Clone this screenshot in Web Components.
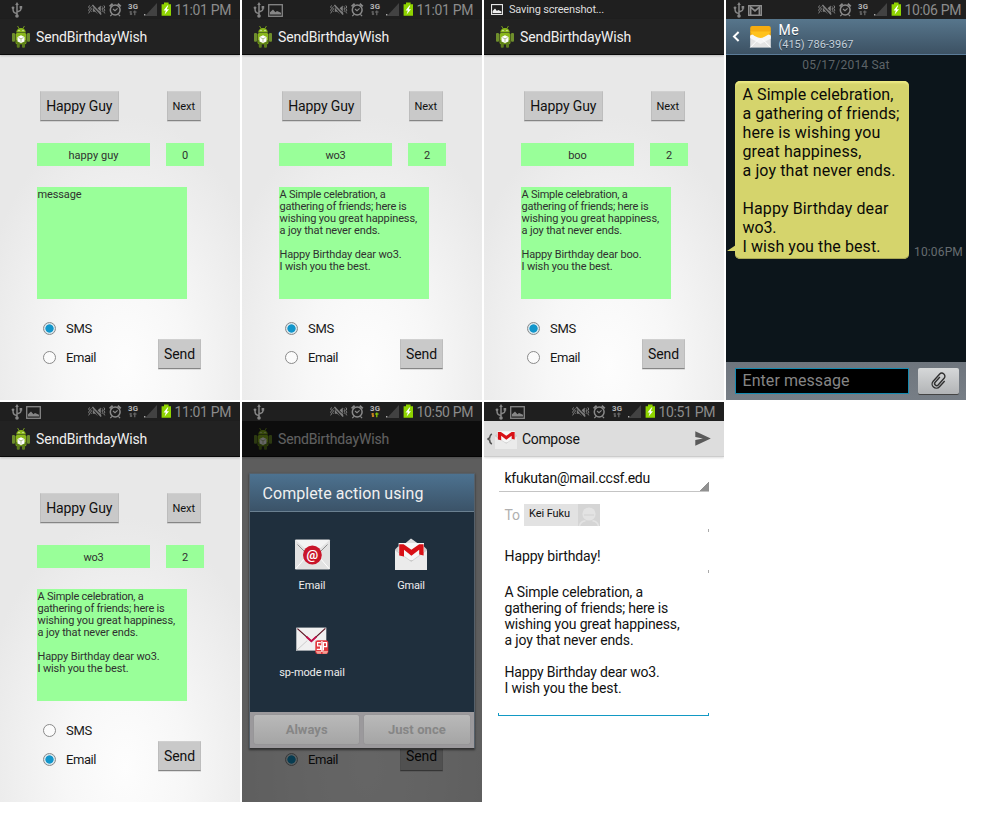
<!DOCTYPE html>
<html lang="en">
<head>
<meta charset="utf-8">
<title>SendBirthdayWish</title>
<style>
body{margin:0;background:#fff;font-family:Roboto,"Liberation Sans",sans-serif}
</style>
</head>
<body>
<screen-gallery></screen-gallery>
<script>
function define(name, html, setup){
  const t=document.createElement('template');t.innerHTML=html;
  customElements.define(name,class extends HTMLElement{
    connectedCallback(){
      if(this.shadowRoot)return;
      this.attachShadow({mode:'open'}).append(t.content.cloneNode(true));
      if(setup)setup.call(this,this.shadowRoot);
    }
  });
}

/* Icon set, keyed by name: [width, height, markup] */
const ROBOT=`<g fill="#8ab71c"><path d="M4.2 6.4C4.4 3.6 6.4 2 9 2s4.6 1.6 4.8 4.4z"/><path d="M5.6 0l1.5 2.7M12.4 0l-1.5 2.7" stroke="#8ab71c" stroke-width=".8"/><rect x="3.6" y="6.9" width="10.8" height="11.4" rx="1.6"/><rect x="0" y="7" width="3" height="8.8" rx="1" fill="#6f8f2c"/><rect x="15" y="7" width="3" height="8.8" rx="1" fill="#6f8f2c"/><rect x="4.8" y="16" width="3" height="5.8" rx="1" fill="#5c7c1c"/><rect x="10" y="16" width="3" height="5.8" rx="1" fill="#5c7c1c"/></g><path d="M4 14h10v3.4H4z" fill="#5f8414"/><path d="M9 9.2l3.5 1.7v4.5L9 17l-3.5-1.6v-4.5z" fill="#fff"/><path d="M6.4 11.6L9 12.8l2.6-1.2M9 12.8v3" stroke="#93a866" fill="none" stroke-width=".7"/><circle cx="7" cy="4.6" r=".6" fill="#fff"/><circle cx="11" cy="4.6" r=".6" fill="#fff"/>`;
const GMAIL=`<path d="M0 11.5L3 8.6h26l3 2.9V32H0z" fill="#cfcfcf"/><path d="M10 5.5L16 .4l7 5.1z" fill="#ddd"/><path d="M3.6 5H29v17H3.6z" fill="#f7f7f7"/><path d="M0 12l16.3 11.4L32 12v20H0z" fill="#ebebeb"/><path d="M0 12l16.3 11.4L32 12" fill="none" stroke="#c4c4c4" stroke-width=".7"/><path d="M4.2 17.4V6.2h4.4l7.8 5.6 7.8-5.6h4.4v11.2l-4.4-1V11.8l-7.8 6-7.4-6v6.8z" fill="#d81016"/>`;
const ICONS={
 usb:[12,16,`<g fill="none" stroke="#868686" stroke-width="1.5"><path d="M6 2v12M6 11.6C2.6 10.6 2 10 2 6.6M6 10c3.3-1 4-1.6 4-4"/></g><path d="M6 0l1.8 3H4.2z" fill="#868686"/><circle cx="6" cy="14" r="1.8" fill="#868686"/><circle cx="2" cy="5.8" r="1.4" fill="#868686"/><path d="M8.6 4h2.6v2.6H8.6z" fill="#868686"/>`],
 picture:[15,13,`<rect x=".7" y=".7" width="13.6" height="11.6" fill="none" stroke="currentColor" stroke-width="1.3"/><path d="M2 10.6V8.2l3-2.8 2.4 2.8L9 7l4 1.8v1.8z" fill="currentColor"/>`],
 gmailNote:[14,11,`<path d="M.7.7h12.6v9.6H.7z" fill="none" stroke="#8d8d8d" stroke-width="1.4"/><path d="M2.6 10V2.2L7 6l4.4-3.8V10" fill="none" stroke="#8d8d8d" stroke-width="1.7"/>`],
 robot:[18,22,ROBOT],
 gmail:[32,32,GMAIL],
 email:[35,31,`<rect y=".5" width="35" height="30" rx="1" fill="#e2e2e2"/><path d="M.4.9h34.2L17.5 16z" fill="#f3f3f3"/><path d="M.6 30L13 15.5M34.4 30L22 15.5" stroke="#fff" fill="none"/><path d="M2.5 5.5l8 8M32.5 5.5l-8 8" stroke="#8d8d8d" fill="none"/><circle cx="17.4" cy="16" r="9.4" fill="#c9152a"/><text x="17.4" y="19.6" text-anchor="middle" font-family="Roboto" font-weight="700" font-size="13" fill="#fff">@</text>`],
 spmail:[33,28,`<path d="M.3.6h30v23H.3z" fill="#f0f0f0"/><path d="M.3 23.6l11-10M30.3 23.6l-11-10" stroke="#ccc" fill="none"/><path d="M1.4 1.6l14 12.6L29.4 1.4" fill="none" stroke="#5d1524" stroke-width="1.2"/><path d="M10.4 9.8l5 4.5 5-4.7" fill="none" stroke="#c3104a" stroke-width="1.9"/><rect x="19.3" y="13.3" width="13" height="13.6" rx="2.5" fill="#e2383e"/><path d="M19.8 24h5.2v2.8h-3.6zM26.6 24h5.6l-1.6 2.8h-4z" fill="#f29d92"/><path d="M24.8 15.6h-3.2v3.2h3v3.6h-3.8M27.4 23.4v-7.8h3.2v4h-2.6M25.9 14v11" fill="none" stroke="#fff" stroke-width="1.2"/>`],
 envelope:[21,22,`<rect x=".2" y="10" width="20.6" height="11.6" fill="#e4e4e4"/><path d="M.2 2a2 2 0 012-2h16.6a2 2 0 012 2v8.2H.2z" fill="#f5ac10"/><path d="M.2 9.4L2 8.4h17l1.8 1v3L10.5 18 .2 12z" fill="#f6f6f6"/><path d="M.4 5.4L2 7.8C4 9.6 7 11.9 10.5 11.9S17 9.6 19 7.8l1.6-2.4z" fill="#ffc21c"/><path d="M.4 21.4l8-8.2M20.6 21.4l-8-8.2" stroke="#fff" fill="none"/>`],
 backWhite:[8,11,`<path d="M6.6 1L2 5.5 6.6 10" fill="none" stroke="#fff" stroke-width="2"/>`],
 backDark:[6,12,`<path d="M4.8.8Q2.6 2.4 2.6 5 .9 5.5.9 6t1.7 1Q2.6 9.8 4.8 11.2" fill="none" stroke="#4d4d4d" stroke-width="1.6"/>`],
 send:[16,15,`<path d="M.3.2L15.8 7.4.3 14.8V8.9l7.6-1.5L.3 6z" fill="#5a5a5a"/>`],
 clip:[16,18,`<g transform="rotate(42 8 9)" fill="none" stroke="#303030" stroke-width="1.4"><path d="M6 5.5v7a2 2 0 004 0V3.6a3.1 3.1 0 00-6.2 0V13a4.2 4.2 0 008.4 0V5.2"/></g>`],
 person:[22,22,`<circle cx="11" cy="10" r="6.6" fill="#e3e3e3"/><path d="M6 11h10" stroke="#d4d4d4" fill="none" stroke-width="1.2"/><path d="M1.5 22q1-4.6 6-5.2M20.5 22q-1-4.6-6-5.2" fill="none" stroke="#e3e3e3" stroke-width="1.6"/>`]
};
define('glyph-icon',`<style>:host{display:block;flex:none;line-height:0}svg{display:block;overflow:visible}</style>`,function(r){
  const [w,h,m]=ICONS[this.getAttribute('name')];
  const W=+this.getAttribute('w')||w, H=+this.getAttribute('h')||h;
  r.innerHTML+=`<svg width="${W}" height="${H}" viewBox="0 0 ${w} ${h}" preserveAspectRatio="none">${m}</svg>`;
});

/* Single line of text, tracked so that it occupies the width in "w" */
define('fit-text',`<style>:host{display:block;white-space:pre;width:max-content;flex:none}</style><slot></slot>`,function(){
  const w=+this.getAttribute('w');
  if(w)this.style.letterSpacing=((w-this.getBoundingClientRect().width)/this.textContent.length).toFixed(3)+'px';
});

/* Ringer, alarm, network, signal and battery indicators */
define('status-tray',`<style>:host{display:block;flex:none}svg{display:block}</style>
<svg width="86" height="19" viewBox="0 0 86 19">
<g fill="none" stroke="#7f7f7f">
<path d="M1.6 5.4L.6 7l1 1.6-1 1.6 1 1.6-1 1.6M3.4 6.4l-.8 1.2.8 1.4-.8 1.4.8 1.4M15.8 5.4l1 1.6-1 1.6 1 1.6-1 1.6 1 1.6M14 6.4l.8 1.2-.8 1.4.8 1.4-.8 1.4"/>
<path d="M4.4 5l8.8 9.6" stroke-width="1.5"/></g>
<path d="M4.8 7.6h2L12.8 14V5.4L9.6 8.2l3.6 4M4.8 7.6v4.2h2.4l3 2.6" fill="#7f7f7f"/>
<g fill="none" stroke="#8a8a8a"><circle cx="27.2" cy="10" r="4.9" stroke-width="1.5"/><path d="M25 9l2 1.6 2.6-2.2M24 14.4l-1.7 1.8M30.4 14.4l1.7 1.8" stroke-width="1.2"/><path d="M21.6 6.4l3-2.6M32.8 6.4l-3-2.6" stroke-width="1.8"/></g>
<text x="40" y="9.2" font-family="Roboto" font-weight="700" font-size="7.8" fill="#b8b8b8" textLength="10">3G</text>
<path class="dn" d="M43 11v4M41.8 14h2.4M41.4 12h1.6" stroke="#6c6c6c" stroke-width="1.2"/><path class="up" d="M46.8 15.2v-4.6M45 12h3.6" stroke="#6c6c6c" stroke-width="1.2"/>
<path d="M69 3v13H57z" fill="#424242"/><path d="M56 14h1.4v1.6H56z" fill="#aaa"/>
<path d="M76 2.4h4.6v1.8H83v11.6h-9.4V4.2H76z" fill="#8fd400"/><path d="M79.4 5.4L75.6 10.4h2.2L76.6 14.6 81 9.2h-2.3l1.6-3.8z" fill="#fff"/>
</svg>`,function(r){
  if(this.hasAttribute('active')){r.querySelector('.dn').setAttribute('stroke','#f09a20');r.querySelector('.up').setAttribute('stroke','#8fd400')}
});

define('status-bar',`<style>:host{display:flex;align-items:center;height:19px;background:#1f1f1f;box-sizing:border-box;padding:0 9.5px 0 10.5px;color:#8c8c8c}
.left{display:flex;align-items:center;gap:3.5px;flex:1;padding-top:1px}status-tray{margin-top:0}.clock{font-size:14px;line-height:20px;margin-left:1px;width:56px}</style>
<div class="left"><slot></slot></div><status-tray></status-tray><div class="clock"></div>`,function(r){
  if(this.hasAttribute('active')){const t=document.createElement('status-tray');t.setAttribute('active','');r.querySelector('status-tray').replaceWith(t)}
  r.querySelector('.clock').innerHTML=`<fit-text w="56.5">${this.getAttribute('time')}</fit-text>`;
});

define('app-bar',`<style>:host{display:flex;align-items:center;gap:6px;height:36px;padding-left:12px;background:#222;box-sizing:border-box;border-bottom:1px solid #0a0a0a;color:#f0f0f0;font-size:14px;line-height:20px;box-shadow:0 1px 2px #0003;position:relative}</style>
<glyph-icon name="robot"></glyph-icon><fit-text w="111">SendBirthdayWish</fit-text>`);

define('holo-button',`<style>:host{display:flex;align-items:center;justify-content:center;box-sizing:border-box;height:30px;background:#c9c9c9;border:1px solid #bdbdbd;border-top-color:#d0d0d0;border-bottom:1px solid #858585;color:#111;box-shadow:0 1px 0 #0000001a}</style><slot></slot>`);

define('radio-row',`<style>:host{display:flex;align-items:center;gap:10px;height:29px;font-size:13px;color:#1a1a1a}
i{box-sizing:border-box;flex:none;width:13px;height:13px;border:1px solid #8a8a8a;border-radius:50%;display:block;background:#fbfbfb}
:host([checked]) i{background:radial-gradient(circle,#1296cb 0 3.8px,#d3e6ee 4.4px)}</style><i></i><slot></slot>`);

const POEM=[['A Simple celebration, a',106],['gathering of friends; here is',127],['wishing you great happiness,',137.5],['a joy that never ends.',100.5],['',0]];
define('wish-form',`<style>
:host{display:block;height:345px;box-sizing:border-box;padding:36px 0 0;background:radial-gradient(ellipse 150px 250px at 125px 310px,#fdfdfd,#f7f7f7 40%,#e8e8e8)}
.row{display:flex}.actions{padding-left:40px;gap:48px;height:30px}
.fields{padding:22px 0 0 37px;gap:16px;height:23px}
.field{background:#9f9;color:#303030;font-size:11px;line-height:13px;box-sizing:border-box;padding-top:1px;display:flex;align-items:center;justify-content:center}
.msg{background:#9f9;margin:21px 0 0 37px;width:150px;height:112px;box-sizing:border-box;padding:2px 0 0 .5px;font-size:11px;line-height:12px;color:#303030}
.msg fit-text{min-height:12px}
.foot{padding:15px 0 0 43px;gap:63px}.foot holo-button{margin-top:25px}
.big{width:78.5px;font-size:14px}.next{width:34.5px;font-size:11px}.send{width:43px;font-size:14px}
</style>
<div class="row actions"></div><div class="row fields"></div><div class="msg"></div>
<div class="row foot"></div>`,function(r){
  const a=n=>this.getAttribute(n), T=(t,w)=>`<fit-text w="${w}">${t}</fit-text>`;
  const q=s=>r.querySelector(s), bare=this.hasAttribute('covered'), mode=a('mode');
  if(!bare){
    q('.actions').innerHTML=`<holo-button class="big">${T('Happy Guy',66)}</holo-button><holo-button class="next">${T('Next',22.5)}</holo-button>`;
    q('.fields').innerHTML=`<div class="field" style="width:113px">${T(a('name'),a('nw'))}</div><div class="field" style="width:38px">${T(a('count'),6)}</div>`;
    q('.msg').innerHTML=a('name')==='happy guy'?T('message',44):[...POEM,[`Happy Birthday dear ${a('name')}.`,a('name')==='boo'?120:122],['I wish you the best.',91]].map(([t,w])=>T(t,w)).join('');
  }
  q('.foot').innerHTML=`<div style="width:52px">${bare?'<div style="height:29px"></div>':`<radio-row ${mode==='sms'?'checked':''}>${T('SMS',26)}</radio-row>`}<radio-row ${mode==='email'?'checked':''}>${T('Email',30)}</radio-row></div><holo-button class="send">${T('Send',31)}</holo-button>`;
});

define('sms-thread',`<style>
:host{display:flex;flex-direction:column;height:381px;background:#0c151b}
.head{display:flex;align-items:center;height:36px;box-sizing:border-box;padding-left:6px;background:linear-gradient(#57768c,#3c5163);border-bottom:1px solid #5b7b98;color:#fff;text-shadow:0 1px 0 #0006}
.head glyph-icon+glyph-icon{margin:0 7.5px 0 10px}.who{font-size:14px;line-height:15px;padding-top:1px}.num{font-size:11px;line-height:13px;color:#c3d0da}
.date{display:flex;justify-content:center;font-size:12px;line-height:21px;height:19px;color:#5e6468}
.thread{flex:1;display:flex;align-items:flex-start;padding:7px 0 0 9px;gap:5px}
.bubble{position:relative;width:174px;height:178px;box-sizing:border-box;background:#d5d46c;border-radius:5px;padding:4px 0 0 7.5px;font-size:16px;line-height:19px;color:#0a0a08;box-shadow:inset 0 3px 2px -1px #ecea84,inset 0 -1px 0 #aaa956}
.bubble fit-text{min-height:19px}
.bubble:before{content:"";position:absolute;left:-8px;bottom:8px;width:9px;height:6px;background:#d5d46c;clip-path:polygon(0 100%,100% 0,100% 100%)}
.time{font-size:12px;line-height:16px;color:#666c70;margin-top:163px}
.bar{display:flex;align-items:center;gap:9px;height:38px;background:linear-gradient(#6e757d,#777e86);padding-left:9px}
.in{width:174px;height:26px;margin-top:-1px;background:#000;border:1px solid #168ab0;box-sizing:border-box;display:flex;align-items:center;padding:1px 0 0 6.5px;font-size:16px;line-height:20px;color:#858585}
.att{width:41px;height:26px;margin-top:-1px;border-radius:2px;background:linear-gradient(#d6d8d9,#b2b4b6);display:flex;align-items:center;justify-content:center;box-shadow:0 1px 0 #444}
</style>
<div class="head"><glyph-icon name="backWhite"></glyph-icon><glyph-icon name="envelope"></glyph-icon><div><fit-text class="who" w="20.5">Me</fit-text><fit-text class="num" w="75">(415) 786-3967</fit-text></div></div>
<div class="date"><fit-text w="87.5">05/17/2014 Sat</fit-text></div>
<div class="thread"><div class="bubble"><fit-text w="151">A Simple celebration,</fit-text><fit-text w="157">a gathering of friends;</fit-text><fit-text w="138">here is wishing you</fit-text><fit-text w="119">great happiness,</fit-text><fit-text w="153">a joy that never ends.</fit-text><fit-text></fit-text><fit-text w="146">Happy Birthday dear</fit-text><fit-text w="34">wo3.</fit-text><fit-text w="138">I wish you the best.</fit-text></div><fit-text class="time" w="49">10:06PM</fit-text></div>
<div class="bar"><div class="in"><fit-text w="107">Enter message</fit-text></div><div class="att"><glyph-icon name="clip"></glyph-icon></div></div>`);

define('app-choice',`<style>:host{display:flex;flex-direction:column;align-items:center;width:98px;height:87px;font-size:11px;line-height:14px;color:#eee}
.pic{height:32px;display:flex;align-items:center;margin-bottom:9px}</style><div class="pic"><slot name="icon"></slot></div><slot></slot>`);

define('chooser-dialog',`<style>
:host{display:block;position:absolute;left:0;right:0;top:19px;bottom:0;background:rgba(0,0,0,.6);box-sizing:border-box;padding:52px 7.5px 0 7px}
.d{height:276px;border:1px solid #55606a;border-bottom-color:#333;box-sizing:border-box;display:flex;flex-direction:column;box-shadow:0 1px 2px #0008;background:#1f2f3d}
.t{height:38px;box-sizing:border-box;background:linear-gradient(#4d7290,#3b5368);border-bottom:1px solid #6a8090;color:#f0f0f0;font-size:16px;display:flex;align-items:center;padding:1px 0 0 12.5px}
.g{height:200px;box-sizing:border-box;padding:26px 0 0 13px;display:grid;grid-template-columns:99px 98px;grid-auto-rows:87px;align-content:start}
.b{flex:1;background:#9b999c;display:flex;gap:5px;padding:1px 4px 3px;align-items:center}
.b div{flex:1;height:29px;border-radius:2px;background:linear-gradient(#b9b9b9,#a5a5a5);display:flex;align-items:center;justify-content:center;font-weight:700;font-size:13px;color:#868686;box-shadow:0 0 1px #777}
</style><div class="d"><div class="t"><fit-text w="161">Complete action using</fit-text></div>
<div class="g"><app-choice><glyph-icon slot="icon" name="email"></glyph-icon><fit-text w="27">Email</fit-text></app-choice><app-choice><glyph-icon slot="icon" name="gmail"></glyph-icon><fit-text w="27.5">Gmail</fit-text></app-choice><app-choice><glyph-icon slot="icon" name="spmail"></glyph-icon><fit-text w="65.5">sp-mode mail</fit-text></app-choice></div>
<div class="b"><div><fit-text w="42">Always</fit-text></div><div><fit-text w="58">Just once</fit-text></div></div></div>`);

define('mail-compose',`<style>
:host{display:block;height:381px;background:#fff;font-size:14px;color:#111}
.h{display:flex;align-items:center;height:36px;box-sizing:border-box;padding:0 13px 0 3px;background:#ddd;border-bottom:1px solid #ccc;box-shadow:0 1px 2px #0002;gap:2px}
.h .name{flex:1;padding:1px 0 0 3px}
.p{padding:0 15.5px 0 14.5px}
.from{height:35px;box-sizing:border-box;padding:10.5px 0 0 6px;line-height:20px;border-bottom:1px solid #c4c4c4;background:linear-gradient(135deg,transparent 50%,#919191 50%) right bottom/9px 9px no-repeat}
.to{display:flex;align-items:center;padding:0 0 0 6px;height:46px;gap:4px;margin-bottom:-9px;color:#b0b0b0}
.chip{display:flex;align-items:center;justify-content:space-between;width:75.5px;height:22px;box-sizing:border-box;padding-left:5px;background:#e2e2e2;font-size:11px;color:#111}
.chip fit-text{margin-top:-3px}.chip glyph-icon{background:#d5d5d5}
.tick{height:3px;width:1px;margin-left:auto;background:#aaa}
.sub{height:38px;box-sizing:border-box;padding:17px 0 0 6px;line-height:14px}
.m{padding:11px 0 0 6px;line-height:16px;height:140px;box-sizing:border-box}.m fit-text{min-height:16px}
.line{height:3px;margin-left:-.5px;border:solid #1299c4;border-width:0 1px 1px;box-sizing:border-box}
</style>
<div class="h"><glyph-icon name="backDark"></glyph-icon><glyph-icon name="gmail" w="22" h="21"></glyph-icon><div class="name"><fit-text w="57.5">Compose</fit-text></div><glyph-icon name="send"></glyph-icon></div>
<div class="p"><div class="from"><fit-text w="145.5">kfukutan@mail.ccsf.edu</fit-text></div>
<div class="to"><fit-text w="15.5">To</fit-text><div class="chip"><fit-text w="41">Kei Fuku</fit-text><glyph-icon name="person"></glyph-icon></div></div>
<div class="tick"></div>
<div class="sub"><fit-text w="96">Happy birthday!</fit-text></div>
<div class="tick"></div>
<div class="m"><fit-text w="138.5">A Simple celebration, a</fit-text><fit-text w="163.5">gathering of friends; here is</fit-text><fit-text w="175">wishing you great happiness,</fit-text><fit-text w="129">a joy that never ends.</fit-text><fit-text></fit-text><fit-text w="155">Happy Birthday dear wo3.</fit-text><fit-text w="117">I wish you the best.</fit-text></div>
<div class="line"></div></div>`);

define('phone-screen',`<style>:host{display:block;position:relative;width:240px;height:400px;overflow:hidden}</style><slot></slot>`);

define('screen-gallery',`<style>
:host{display:grid;grid-template-columns:repeat(4,240px);grid-auto-rows:400px;gap:2px;height:824px;align-content:start}
.pic{color:#868686}
.saving{display:flex;align-items:center;gap:6px;height:19px;box-sizing:border-box;padding:0 0 1px 7px;background:#1f1f1f;color:#ddd;font-size:11px}.saving .pic{color:#eee}
.late{padding:0 5.5px 0 6.5px}
</style>
<phone-screen><status-bar time="11:01 PM"><glyph-icon name="usb"></glyph-icon></status-bar><app-bar></app-bar><wish-form name="happy guy" nw="50" count="0" mode="sms"></wish-form></phone-screen>
<phone-screen><status-bar time="11:01 PM"><glyph-icon name="usb"></glyph-icon><glyph-icon class="pic" name="picture"></glyph-icon></status-bar><app-bar></app-bar><wish-form name="wo3" nw="20" count="2" mode="sms"></wish-form></phone-screen>
<phone-screen><div class="saving"><glyph-icon class="pic" name="picture" w="12" h="11"></glyph-icon><fit-text w="95">Saving screenshot...</fit-text></div><app-bar></app-bar><wish-form name="boo" nw="18.5" count="2" mode="sms"></wish-form></phone-screen>
<phone-screen><status-bar class="late" time="10:06 PM"><glyph-icon name="usb"></glyph-icon><glyph-icon name="gmailNote"></glyph-icon></status-bar><sms-thread></sms-thread></phone-screen>
<phone-screen><status-bar time="11:01 PM"><glyph-icon name="usb"></glyph-icon><glyph-icon class="pic" name="picture"></glyph-icon></status-bar><app-bar></app-bar><wish-form name="wo3" nw="20" count="2" mode="email"></wish-form></phone-screen>
<phone-screen><status-bar active time="10:50 PM"><glyph-icon name="usb"></glyph-icon></status-bar><app-bar></app-bar><wish-form covered mode="email"></wish-form><chooser-dialog></chooser-dialog></phone-screen>
<phone-screen><status-bar time="10:51 PM"><glyph-icon name="usb"></glyph-icon><glyph-icon class="pic" name="picture"></glyph-icon></status-bar><mail-compose></mail-compose></phone-screen>`);
</script>
</body>
</html>
